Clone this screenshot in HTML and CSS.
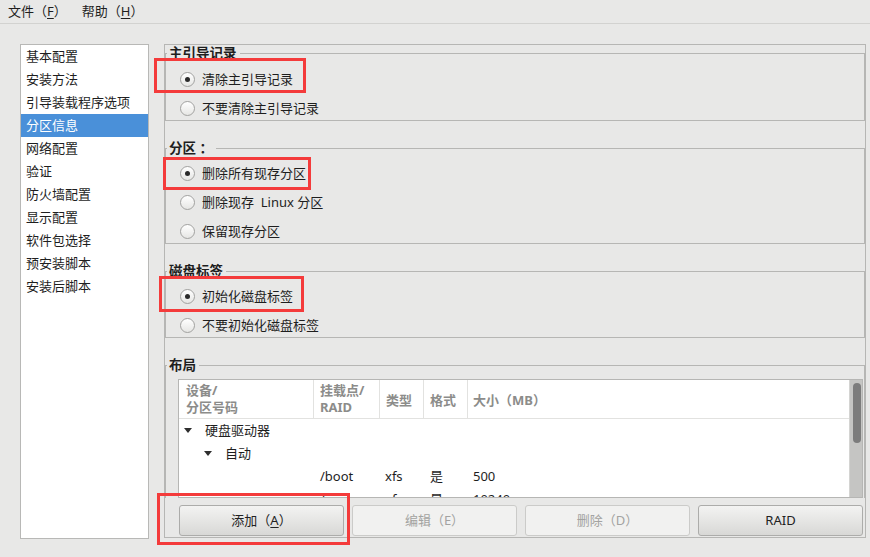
FILE: index.html
```html
<!DOCTYPE html>
<html lang="zh-CN">
<head>
<meta charset="utf-8">
<title>Kickstart</title>
<link rel="stylesheet" href="styles.css">
</head>
<body>
<div class="menubar">
  <span class="menu">文件（<u>F</u>）</span>
  <span class="menu">帮助（<u>H</u>）</span>
</div>
<div class="main">
  <ul class="sidebar">
    <li>基本配置</li>
    <li>安装方法</li>
    <li>引导装载程序选项</li>
    <li class="selected">分区信息</li>
    <li>网络配置</li>
    <li>验证</li>
    <li>防火墙配置</li>
    <li>显示配置</li>
    <li>软件包选择</li>
    <li>预安装脚本</li>
    <li>安装后脚本</li>
  </ul>
  <div class="panel">
    <div class="scroll">
      <fieldset class="frame first">
        <legend>主引导记录</legend>
        <div class="radio checked"><span class="dot"></span>清除主引导记录</div>
        <div class="radio"><span class="dot"></span>不要清除主引导记录</div>
      </fieldset>
      <fieldset class="frame">
        <legend>分区 ：</legend>
        <div class="radio checked"><span class="dot"></span>删除所有现存分区</div>
        <div class="radio"><span class="dot"></span>删除现存&nbsp; Linux 分区</div>
        <div class="radio"><span class="dot"></span>保留现存分区</div>
      </fieldset>
      <fieldset class="frame">
        <legend>磁盘标签</legend>
        <div class="radio checked"><span class="dot"></span>初始化磁盘标签</div>
        <div class="radio"><span class="dot"></span>不要初始化磁盘标签</div>
      </fieldset>
      <fieldset class="frame layout">
        <legend>布局</legend>
        <div class="tree">
          <div class="list">
            <div class="thead">
              <div class="th">设备/<br>分区号码</div>
              <div class="th">挂载点/<br>RAID</div>
              <div class="th">类型</div>
              <div class="th">格式</div>
              <div class="th">大小（MB）</div>
            </div>
            <div class="row"><div class="td c1"><span class="tri"></span>硬盘驱动器</div></div>
            <div class="row"><div class="td c1 l2"><span class="tri"></span>自动</div></div>
            <div class="row"><div class="td"></div><div class="td">/boot</div><div class="td">xfs</div><div class="td">是</div><div class="td">500</div></div>
            <div class="row"><div class="td"></div><div class="td">/</div><div class="td">xfs</div><div class="td">是</div><div class="td">10240</div></div>
          </div>
          <div class="vscroll"><div class="thumb"></div></div>
        </div>
      </fieldset>
    </div>
    <div class="buttons">
      <button class="btn">添加（<u>A</u>）</button>
      <button class="btn" disabled>编辑（E）</button>
      <button class="btn" disabled>删除（D）</button>
      <button class="btn">RAID</button>
    </div>
  </div>
</div>
<div class="mark m1"></div>
<div class="mark m2"></div>
<div class="mark m3"></div>
<div class="mark m4"></div>
</body>
</html>
```
FILE: styles.css
```css
* { box-sizing: border-box; }
html, body { margin: 0; padding: 0; }
body {
  width: 870px;
  height: 557px;
  overflow: hidden;
  background: #e8e8e7;
  color: #1e1e1e;
  font-family: "Noto Sans", "Noto Sans CJK SC", sans-serif;
  font-size: 13px;
  line-height: 17px;
  position: relative;
}
u { text-decoration: underline; text-underline-offset: 2px; }

.menubar {
  height: 24px;
  border-bottom: 1px solid #d2d2d0;
  display: flex;
  align-items: center;
  gap: 15px;
  padding-left: 8px;
  padding-bottom: 1px;
}

.main {
  display: flex;
  padding: 20px 0 0 20px;
}

.sidebar {
  list-style: none;
  margin: 0;
  padding: 0;
  width: 129px;
  height: 495px;
  background: #fff;
  border: 1px solid #b8b8b6;
}
.sidebar li {
  height: 23px;
  line-height: 23px;
  padding-left: 5px;
  white-space: nowrap;
}
.sidebar li.selected { background: #4a90d9; color: #fff; }

.panel {
  margin-left: 15px;
  width: 702px;
  height: 494px;
  border: 1px solid #b6b6b4;
  display: flex;
  flex-direction: column;
}
.scroll {
  height: 453px;
  overflow: hidden;
}

.frame {
  margin: 19px 0 0 0;
  padding: 4px 0 0 14px;
  border: 1px solid #b6b6b4;
  min-width: 0;
}
.frame.first { margin-top: 0; padding-top: 5px; }
.frame legend {
  font-weight: bold;
  font-size: 13.5px;
  padding: 0 3px 0 2px;
  margin-left: -13px;
  line-height: 17px;
  height: 17px;
}
.radio {
  height: 24px;
  display: flex;
  align-items: center;
  gap: 7px;
}
.radio + .radio { margin-top: 5px; }
.dot {
  width: 15px;
  height: 15px;
  border-radius: 50%;
  border: 1px solid #a2a2a0;
  background: linear-gradient(#ffffff, #e6e6e4);
  display: flex;
  align-items: center;
  justify-content: center;
}
.radio.checked .dot::after {
  content: "";
  width: 5px;
  height: 5px;
  border-radius: 50%;
  background: #2a2a2a;
}

.frame.layout { padding: 5px 1px 0 12px; }
.frame.layout legend { margin-left: -11px; }
.tree {
  height: 119px;
  border: 1px solid #b6b6b4;
  background: #fff;
  display: flex;
  overflow: hidden;
}
.list { flex: 1; overflow: hidden; }
.thead, .row {
  display: grid;
  grid-template-columns: 135px 66px 44px 44px 1fr;
}
.thead {
  height: 39px;
  border-bottom: 1px solid #e2e2e0;
}
.th {
  color: #8c8c8a;
  font-weight: bold;
  padding: 2px 0 0 6px;
  border-right: 1px solid #e2e2e0;
  display: flex;
  align-items: center;
  white-space: nowrap;
}
.th:first-child { padding-left: 7px; align-items: flex-start; }
.th:nth-child(2) { align-items: flex-start; }
.th:last-child { border-right: none; padding-left: 5px; }
.row { height: 23px; align-items: center; }
.td { padding-left: 6px; white-space: nowrap; }
.row .td:nth-child(3) { padding-left: 5px; }
.row .td:nth-child(5) { padding-left: 5px; }
.td.c1 {
  grid-column: 1 / -1;
  padding-left: 5px;
  display: flex;
  align-items: center;
}
.td.c1.l2 { padding-left: 25px; }
.tri {
  width: 0;
  height: 0;
  border-left: 4px solid transparent;
  border-right: 4px solid transparent;
  border-top: 5px solid #2e2e2e;
  margin-right: 13px;
}
.vscroll {
  width: 13px;
  background: #c5c5c3;
  border-left: 1px solid #d4d4d2;
  padding: 3px 0 0 3px;
}
.thumb {
  width: 8px;
  height: 60px;
  background: #7c7c7c;
  border-radius: 4px;
}

.buttons {
  display: grid;
  grid-template-columns: repeat(4, 1fr);
  gap: 8px;
  padding: 7px 2px 0 14px;
}
.btn {
  height: 31px;
  font: inherit;
  color: #222;
  border: 1px solid #acacaa;
  border-radius: 3px;
  background: linear-gradient(#f3f3f2, #d8d8d6);
  padding: 0;
}
.btn:disabled {
  background: #f1f1f0;
  border-color: #cbcbc9;
  color: #a3a3a1;
}

.mark {
  position: absolute;
  border: 3px solid #f43b3b;
}
.m1 { left: 154px; top: 58px; width: 152px; height: 35px; }
.m2 { left: 163px; top: 157px; width: 148px; height: 33px; }
.m3 { left: 159px; top: 276px; width: 145px; height: 36px; }
.m4 { left: 157px; top: 493px; width: 193px; height: 52px; }
```
